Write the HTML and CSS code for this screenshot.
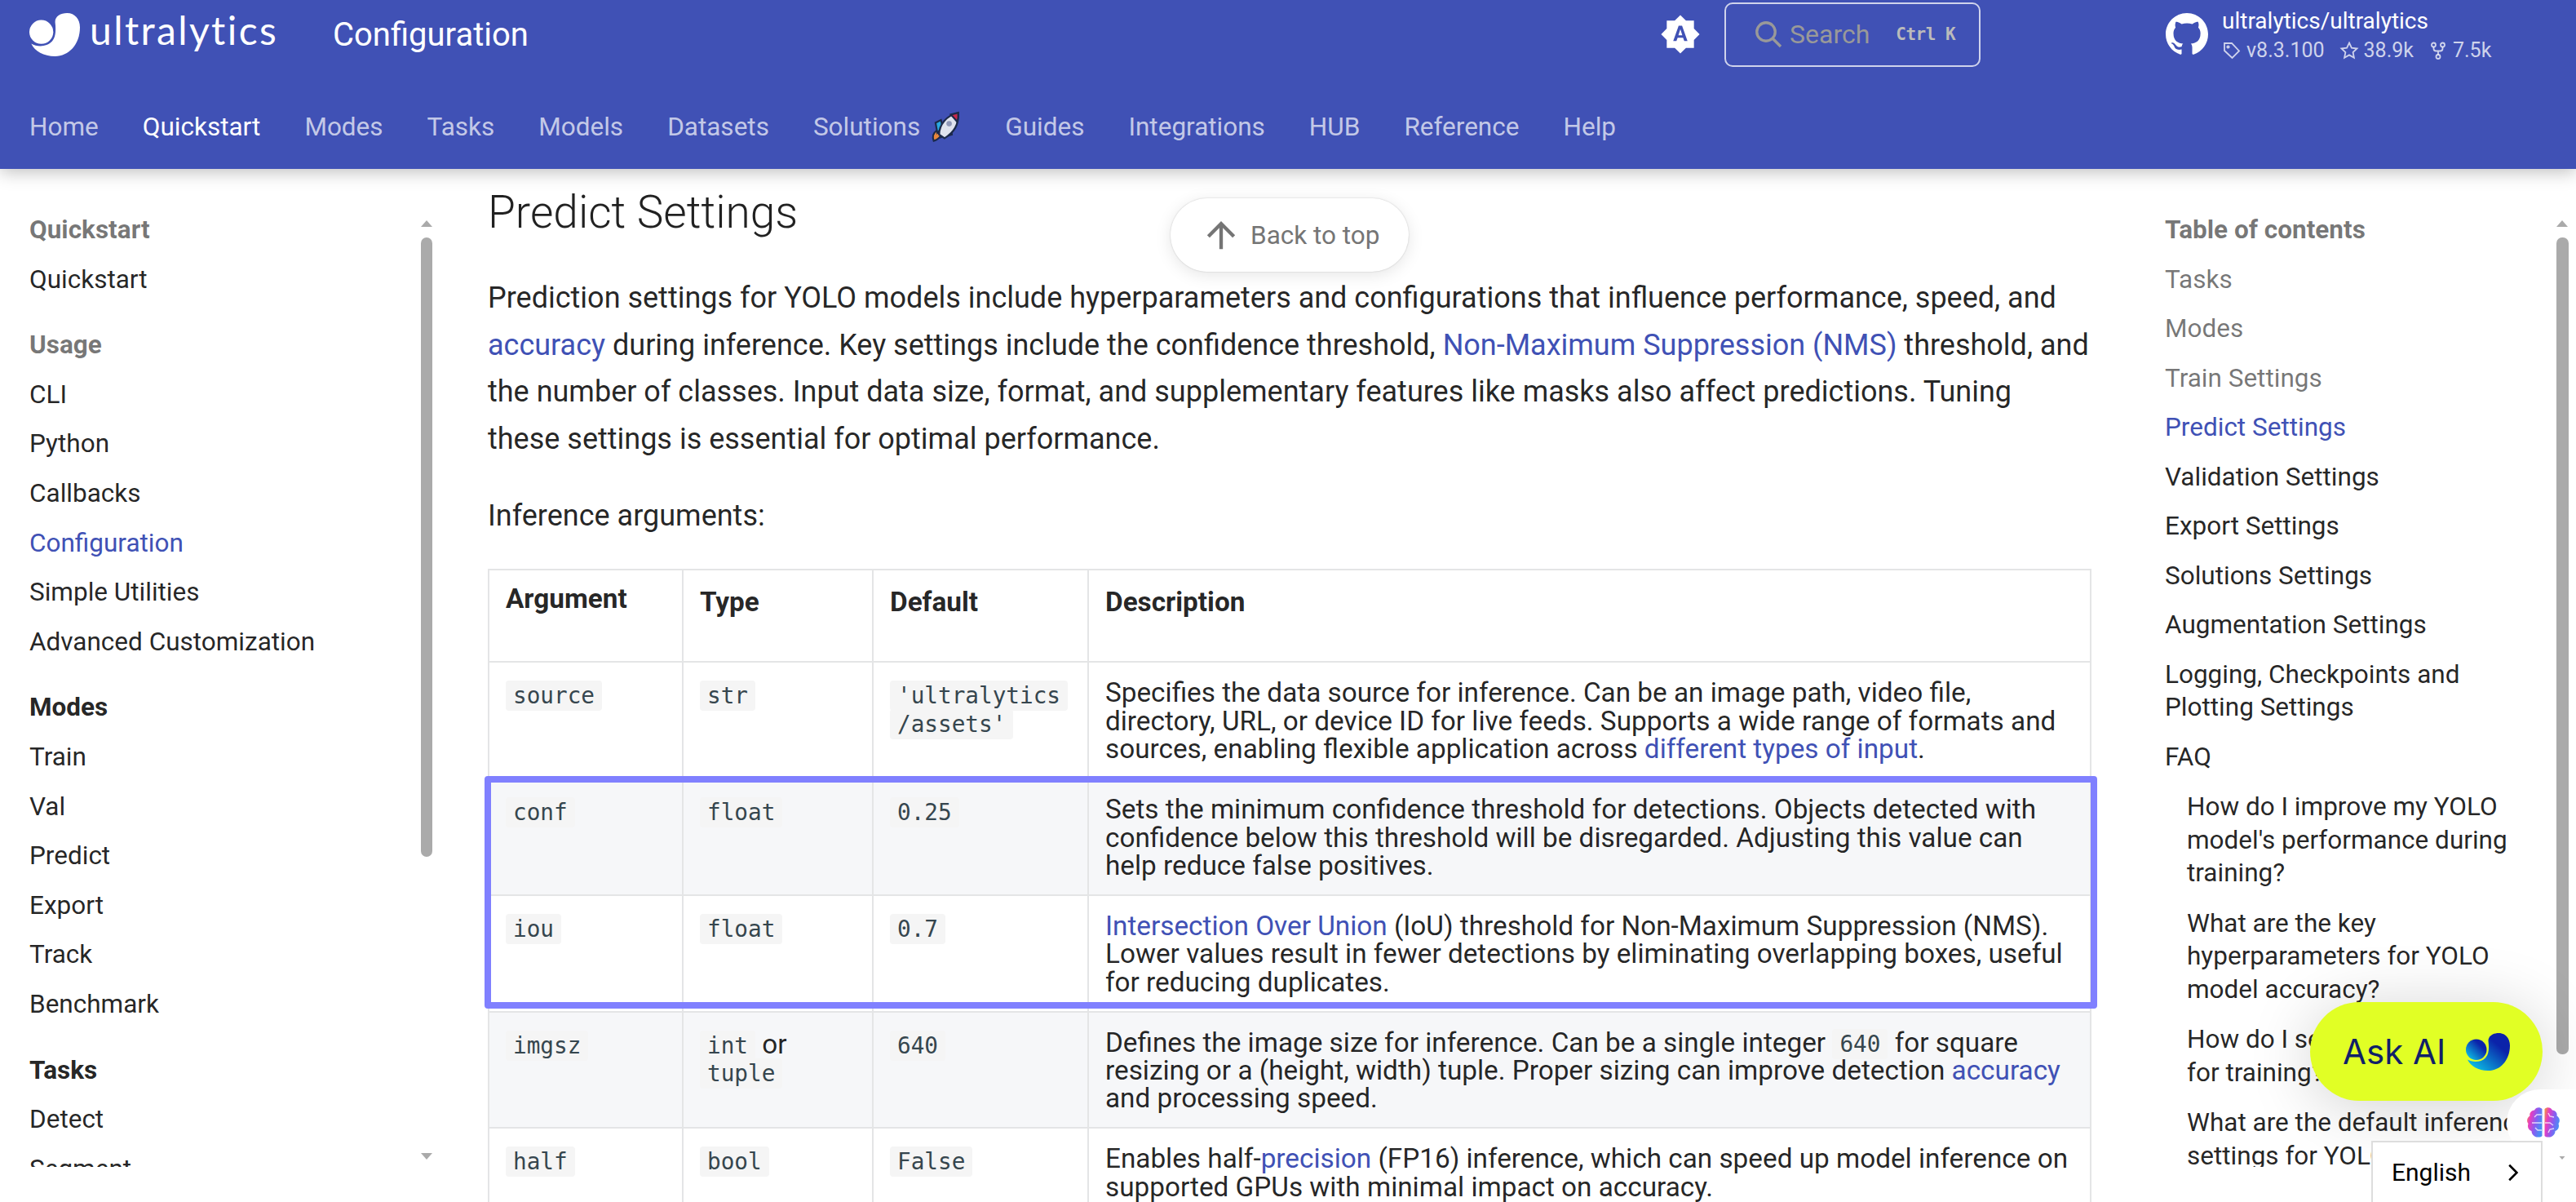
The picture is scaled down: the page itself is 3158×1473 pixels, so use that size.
FILE: index.html
```html
<!DOCTYPE html>
<html lang="en">

<head>
  <meta charset="UTF-8">
  <meta name="viewport" content="width=device-width, initial-scale=1.0">
  <title>Configuration - Ultralytics YOLO Docs</title>
  <link rel="stylesheet" href="styles.css">
</head>

<body>
  <svg width="0" height="0" class="defs">
    <defs>
      <symbol id="mark" viewBox="0 0 161 137">
        <circle cx="38" cy="60" r="38" />
        <path d="M82 28C82 10 100 0 120 0c25 0 41 20 41 45 0 55-36 92-79 92-37 0-64-15-76-40 19 11 49 11 66-7 10-12 14-28 10-62z" />
      </symbol>
      <linearGradient id="markfill" x1="1" y1="0" x2="0" y2="1">
        <stop offset="0.3" stop-color="#0b23a9" />
        <stop offset="1" stop-color="#0bd8ee" />
      </linearGradient>
      <linearGradient id="brainfill" x1="0" y1="0" x2="1" y2="0.4">
        <stop offset="0" stop-color="#f0a030" />
        <stop offset="0.3" stop-color="#e83cc0" />
        <stop offset="0.65" stop-color="#8a5cf0" />
        <stop offset="1" stop-color="#4a8cf5" />
      </linearGradient>
    </defs>
  </svg>

  <header class="header">
    <div class="topbar">
      <div class="brand">
        <svg class="brand-mark"><use href="#mark" /></svg>
        <span class="brand-name">ultralytics</span>
      </div>
      <div class="page-title">Configuration</div>
      <svg class="theme-icon" viewBox="0 0 24 24"><path d="M14.3 16l-.7-2h-3.2l-.7 2H7.8L11 7h2l3.2 9h-1.9M20 8.69V4h-4.69L12 .69 8.69 4H4v4.69L.69 12 4 15.31V20h4.69L12 23.31 15.31 20H20v-4.69L23.31 12 20 8.69m-9.15 3.96h2.3L12 9l-1.15 3.65Z" /></svg>
      <div class="search">
        <svg class="search-icon" viewBox="0 0 24 24"><circle cx="10" cy="10" r="7.5" /><path d="M15.5 15.5 22 22" /></svg>
        <span class="search-text">Search</span>
        <span class="search-key">Ctrl K</span>
      </div>
      <div class="repo">
        <svg class="repo-icon" viewBox="0 0 16 16"><path d="M8 0C3.58 0 0 3.58 0 8c0 3.54 2.29 6.53 5.47 7.59.4.07.55-.17.55-.38 0-.19-.01-.82-.01-1.49-2.01.37-2.53-.49-2.69-.94-.09-.23-.48-.94-.82-1.13-.28-.15-.68-.52-.01-.53.63-.01 1.08.58 1.23.82.72 1.21 1.87.87 2.33.66.07-.52.28-.87.51-1.07-1.78-.2-3.64-.89-3.64-3.95 0-.87.31-1.59.82-2.15-.08-.2-.36-1.02.08-2.12 0 0 .67-.21 2.2.82.64-.18 1.32-.27 2-.27.68 0 1.36.09 2 .27 1.53-1.04 2.2-.82 2.2-.82.44 1.1.16 1.92.08 2.12.51.56.82 1.27.82 2.15 0 3.07-1.87 3.75-3.65 3.95.29.25.54.73.54 1.48 0 1.07-.01 1.93-.01 2.2 0 .21.15.46.55.38A8.013 8.013 0 0016 8c0-4.42-3.58-8-8-8z" /></svg>
        <div class="repo-info">
          <div class="repo-name">ultralytics/ultralytics</div>
          <div class="repo-facts">
            <span class="fact"><svg class="fact-icon" viewBox="0 0 24 24"><path d="M3 3h9l9 9.5-8.5 8.5L3 12z" /><circle cx="7.5" cy="7.5" r="1.2" /></svg>v8.3.100</span>
            <span class="fact"><svg class="fact-icon" viewBox="0 0 24 24"><path d="m12 2.5 2.9 6.2 6.6.8-4.9 4.6 1.3 6.7-5.9-3.4-5.9 3.4 1.3-6.7-4.9-4.6 6.6-.8z" /></svg>38.9k</span>
            <span class="fact"><svg class="fact-icon" viewBox="0 0 24 24"><circle cx="6.5" cy="5" r="2.5" /><circle cx="17.5" cy="5" r="2.5" /><circle cx="12" cy="19.5" r="2.5" /><path d="M6.5 7.5v2c0 2 1 3 3 3h5c2 0 3-1 3-3v-2M12 12.5V17" /></svg>7.5k</span>
          </div>
        </div>
      </div>
    </div>
    <nav class="tabs">
      <a>Home</a>
      <a class="active">Quickstart</a>
      <a>Modes</a>
      <a>Tasks</a>
      <a>Models</a>
      <a>Datasets</a>
      <a class="tab-rocket">Solutions
        <svg class="rocket" viewBox="0 0 36 36">
          <path d="M6 33c-2-5 0-9 3-11l5 5c-2 3-4 5-8 6z" fill="#e8873a" stroke="#1c2a4a" stroke-width="2" />
          <path d="M10 24 8 13l6-3 2 8z" fill="#2aa8e0" stroke="#1c2a4a" stroke-width="2" />
          <path d="M14 29 26 26l-1-7-7 3z" fill="#2aa8e0" stroke="#1c2a4a" stroke-width="2" />
          <path d="M12 26C12 15 20 5 33 2c1 13-5 22-15 28z" fill="#dfe3ee" stroke="#1c2a4a" stroke-width="2" />
          <path d="M25 4 33 2c.4 4 0 7-1 10z" fill="#c8284a" stroke="#1c2a4a" stroke-width="2" />
          <circle cx="23" cy="14" r="3" fill="#8f98b8" />
        </svg>
      </a>
      <a>Guides</a>
      <a>Integrations</a>
      <a>HUB</a>
      <a>Reference</a>
      <a>Help</a>
    </nav>
  </header>

  <main class="layout">
    <aside class="sidebar">
      <div class="side-list">
        <div class="side-head muted">Quickstart</div>
        <a class="side-item">Quickstart</a>
        <div class="side-head muted">Usage</div>
        <a class="side-item">CLI</a>
        <a class="side-item">Python</a>
        <a class="side-item">Callbacks</a>
        <a class="side-item current">Configuration</a>
        <a class="side-item">Simple Utilities</a>
        <a class="side-item">Advanced Customization</a>
        <div class="side-head">Modes</div>
        <a class="side-item">Train</a>
        <a class="side-item">Val</a>
        <a class="side-item">Predict</a>
        <a class="side-item">Export</a>
        <a class="side-item">Track</a>
        <a class="side-item">Benchmark</a>
        <div class="side-head">Tasks</div>
        <a class="side-item">Detect</a>
        <a class="side-item">Segment</a>
      </div>
      <div class="scrollbar">
        <span class="arrow-up"></span>
        <span class="thumb"></span>
        <span class="arrow-down"></span>
      </div>
    </aside>

    <article class="content">
      <h2 class="title">Predict Settings</h2>
      <p class="para">Prediction settings for YOLO models include hyperparameters and configurations that influence performance, speed, and <a>accuracy</a> during inference. Key settings include the confidence threshold, <a>Non-Maximum Suppression (NMS)</a> threshold, and the number of classes. Input data size, format, and supplementary features like masks also affect predictions. Tuning<br>these settings is essential for optimal performance.</p>
      <p class="para">Inference arguments:</p>
      <div class="table-wrap">
        <table class="args">
          <colgroup>
            <col class="col-arg">
            <col class="col-type">
            <col class="col-def">
            <col>
          </colgroup>
          <thead>
            <tr>
              <th class="th-arg">Argument</th>
              <th>Type</th>
              <th>Default</th>
              <th>Description</th>
            </tr>
          </thead>
          <tbody>
            <tr>
              <td><code>source</code></td>
              <td><code>str</code></td>
              <td><code>'ultralytics<br>/assets'</code></td>
              <td>Specifies the data source for inference. Can be an image path, video file, directory, URL, or device ID for live feeds. Supports a wide range of formats and sources, enabling flexible application across <a>different types of input</a>.</td>
            </tr>
            <tr>
              <td><code>conf</code></td>
              <td><code>float</code></td>
              <td><code>0.25</code></td>
              <td>Sets the minimum confidence threshold for detections. Objects detected with confidence below this threshold will be disregarded. Adjusting this value can help reduce false positives.</td>
            </tr>
            <tr>
              <td><code>iou</code></td>
              <td><code>float</code></td>
              <td><code>0.7</code></td>
              <td><a>Intersection Over Union</a> (IoU) threshold for Non-Maximum Suppression (NMS). Lower values result in fewer detections by eliminating overlapping boxes, useful for reducing duplicates.</td>
            </tr>
            <tr>
              <td><code>imgsz</code></td>
              <td><code>int</code> or <code>tuple</code></td>
              <td><code>640</code></td>
              <td>Defines the image size for inference. Can be a single integer <code>640</code> for square resizing or a (height, width) tuple. Proper sizing can improve detection <a>accuracy</a> and processing speed.</td>
            </tr>
            <tr>
              <td><code>half</code></td>
              <td><code>bool</code></td>
              <td><code>False</code></td>
              <td>Enables half-<a>precision</a> (FP16) inference, which can speed up model inference on supported GPUs with minimal impact on accuracy.</td>
            </tr>
          </tbody>
        </table>
        <div class="highlight"></div>
      </div>
    </article>

    <aside class="toc">
      <div class="toc-list">
        <div class="toc-title">Table of contents</div>
        <a class="toc-item past">Tasks</a>
        <a class="toc-item past">Modes</a>
        <a class="toc-item past">Train Settings</a>
        <a class="toc-item current">Predict Settings</a>
        <a class="toc-item">Validation Settings</a>
        <a class="toc-item">Export Settings</a>
        <a class="toc-item">Solutions Settings</a>
        <a class="toc-item">Augmentation Settings</a>
        <a class="toc-item">Logging, Checkpoints and Plotting Settings</a>
        <a class="toc-item">FAQ</a>
        <a class="toc-item sub">How do I improve my YOLO model's performance during training?</a>
        <a class="toc-item sub">What are the key hyperparameters for YOLO model accuracy?</a>
        <a class="toc-item sub">How do I select the batch size for training?</a>
        <a class="toc-item sub">What are the default inference settings for YOLO?</a>
      </div>
      <div class="scrollbar">
        <span class="arrow-up"></span>
        <span class="thumb toc-thumb"></span>
        <span class="arrow-down"></span>
      </div>
    </aside>
  </main>

  <a class="back-top">
    <svg class="back-icon" viewBox="0 0 24 24"><path d="M13 20h-2V8l-5.5 5.5-1.42-1.42L12 4.16l7.92 7.92-1.42 1.42L13 8v12Z" /></svg>
    Back to top
  </a>

  <a class="ask-ai">Ask AI <svg class="ask-mark"><use href="#mark" /></svg></a>

  <div class="brain-tab">
    <svg class="brain" viewBox="0 0 42 40">
      <path d="M19.500 3c-3-3-8-2-9.500 1.500C6 5 3.500 8 4.500 11.500 1 13.500 0 18 2.500 21 1 25 3 29 6.500 30c0 4.500 4 8 8.500 7.500 2 0 3.500-.5 4.500-1.500z" fill="url(#brainfill)" />
      <path d="M22.500 3c3-3 8-2 9.500 1.500C36 5 38.500 8 37.500 11.500 41 13.500 42 18 39.500 21c1.500 4-.5 8-4 9 0 4.500-4 8-8.500 7.500-2 0-3.500-.5-4.500-1.500z" fill="url(#brainfill)" />
      <path d="M19 10h-6l-3 3M19 20H7M19 29h-5l-3-3M27 8l2 4 5 1M23 20h6l4 3M27 32l2-4 5-1" fill="none" stroke="#fff" stroke-width="1.400" opacity=".75" />
    </svg>
  </div>

  <div class="lang">
    <span>English</span>
    <svg class="lang-chevron" viewBox="0 0 24 24"><path d="M8.500 3.500 17 12l-8.500 8.500" /></svg>
  </div>
</body>

</html>
```

FILE: styles.css
```css
html,
body {
  margin: 0;
  padding: 0;
  height: 100%;
}

body {
  overflow: hidden;
  background: #fff;
  color: rgba(0, 0, 0, 0.87);
  font-family: "Roboto", "Liberation Sans", sans-serif;
}

a {
  color: inherit;
  text-decoration: none;
}

.defs {
  position: absolute;
}

/* header */
.header {
  position: relative;
  z-index: 2;
  height: 207px;
  background: #4051b5;
  color: #fff;
  box-shadow: 0 4px 20px rgba(0, 0, 0, 0.25);
}

.topbar {
  display: flex;
  align-items: center;
  height: 84px;
  padding-left: 36px;
}

.brand {
  display: flex;
  align-items: center;
  width: 372px;
}

.brand-mark {
  width: 62px;
  height: 53px;
  margin-top: 1px;
  fill: #fff;
}

.brand-name {
  margin-left: 12px;
  margin-top: -10px;
  font-family: "Lato", sans-serif;
  font-size: 48px;
  line-height: 48px;
  letter-spacing: 2.4px;
}

.page-title {
  width: 1627px;
  font-size: 40px;
}

.theme-icon {
  width: 50px;
  height: 50px;
  fill: #fff;
}

.search {
  display: flex;
  align-items: center;
  box-sizing: border-box;
  width: 314px;
  height: 79px;
  margin-left: 29px;
  padding-left: 34px;
  border: 2px solid rgba(255, 255, 255, 0.75);
  border-radius: 10px;
}

.search-icon {
  width: 36px;
  height: 36px;
  fill: none;
  stroke: #999;
  stroke-width: 2.2;
}

.search-text {
  margin-left: 8px;
  font-size: 32px;
  color: #999;
}

.search-key {
  margin-left: 32px;
  font-family: "DejaVu Sans Mono", monospace;
  font-size: 21px;
  font-weight: 700;
  letter-spacing: -0.5px;
  color: #bbb;
}

.repo {
  display: flex;
  align-items: center;
  margin-left: 227px;
}

.repo-icon {
  width: 52px;
  height: 52px;
  fill: #fff;
}

.repo-info {
  margin-left: 17px;
  padding-top: 3px;
}

.repo-name {
  font-size: 28px;
  line-height: 36px;
}

.repo-facts {
  display: flex;
  gap: 18px;
  font-size: 25px;
  line-height: 36px;
  color: rgba(255, 255, 255, 0.75);
}

.fact {
  display: flex;
  align-items: center;
  gap: 6px;
}

.fact-icon {
  width: 24px;
  height: 24px;
  fill: none;
  stroke: rgba(255, 255, 255, 0.75);
  stroke-width: 1.8;
}

.tabs {
  display: flex;
  align-items: center;
  gap: 54px;
  height: 123px;
  padding: 20px 0 0 36px;
  box-sizing: border-box;
  font-size: 31.5px;
  color: rgba(255, 255, 255, 0.7);
}

.tabs .active {
  color: #fff;
}

.tab-rocket {
  display: flex;
  align-items: center;
  gap: 10px;
}

.rocket {
  width: 40px;
  height: 40px;
}

/* layout */
.layout {
  display: flex;
  height: 1223px;
}

.sidebar {
  display: flex;
  flex: none;
  box-sizing: border-box;
  width: 598px;
  padding: 55px 68px 0 36px;
  overflow: hidden;
}

.side-list {
  flex: 1;
  overflow: hidden;
  font-size: 31.5px;
  line-height: 40.6px;
}

.side-head {
  margin-top: 40px;
  font-weight: 700;
}

.side-head:first-child {
  margin-top: 0;
}

.side-head.muted {
  color: rgba(0, 0, 0, 0.54);
}

.side-item {
  display: block;
  margin-top: 20px;
}

.current {
  color: #4051b5;
}

.scrollbar {
  display: flex;
  flex: none;
  flex-direction: column;
  align-items: center;
  width: 14px;
  padding-top: 8px;
}

.arrow-up,
.arrow-down {
  width: 0;
  height: 0;
  border-left: 7px solid transparent;
  border-right: 7px solid transparent;
}

.arrow-up {
  border-bottom: 8px solid #aaa;
}

.arrow-down {
  margin-top: auto;
  margin-bottom: 9px;
  border-top: 8px solid #aaa;
}

.thumb {
  width: 14px;
  height: 759px;
  margin-top: 13px;
  background: #aaa;
  border-radius: 7px;
}

.toc-thumb {
  width: 15px;
  height: 1001px;
}

/* content */
.content {
  flex: none;
  width: 1966px;
  padding-top: 23px;
}

.title {
  margin: 0;
  font-size: 55px;
  font-weight: 300;
  line-height: 60px;
}

.para {
  margin: 47px 0 0;
  font-size: 36px;
  line-height: 57.6px;
}

.para+.para {
  margin-top: 37px;
}

.para a,
.args a {
  color: #4051b5;
}

.table-wrap {
  position: relative;
  margin-top: 35px;
  font-size: 33.3px;
  line-height: 34.4px;
}

.args {
  width: 100%;
  table-layout: fixed;
  border-collapse: collapse;
}

.args th,
.args td {
  padding: 20px 20px 17.5px;
  border: 2px solid #e4e5e6;
  text-align: left;
  vertical-align: top;
}

.args th {
  height: 72px;
  padding-top: 22px;
  font-weight: 700;
}

.args .th-arg {
  padding-top: 18px;
}

.args td:not(:last-child) {
  padding-top: 22px;
  padding-bottom: 15.5px;
}

.args tbody tr:nth-child(2n) {
  background: #f6f7f9;
}

.col-arg {
  width: 238px;
}

.col-type {
  width: 233px;
}

.col-def {
  width: 264px;
}

code {
  padding: 2px 9px;
  font-family: "DejaVu Sans Mono", "Liberation Mono", monospace;
  font-size: 27.7px;
  line-height: 30px;
  color: #36464e;
  background: #f5f5f5;
  border-radius: 4px;
  -webkit-box-decoration-break: clone;
  box-decoration-break: clone;
}

.highlight {
  position: absolute;
  top: 254px;
  left: -4px;
  width: 1977px;
  height: 285px;
  box-sizing: border-box;
  border: 8px solid #8080ff;
  border-radius: 4px;
}

/* toc */
.toc {
  display: flex;
  flex: none;
  box-sizing: border-box;
  width: 494px;
  margin-left: 90px;
  padding-top: 55px;
}

.toc-list {
  flex: 1;
  overflow: hidden;
  padding-right: 15px;
  font-size: 31.5px;
  line-height: 40.7px;
}

.toc-title {
  font-weight: 700;
  color: rgba(0, 0, 0, 0.54);
}

.toc-item {
  display: block;
  margin-top: 19.8px;
}

.toc-item.past {
  color: rgba(0, 0, 0, 0.54);
}

.toc-item.sub {
  margin-top: 20.6px;
  padding-left: 27px;
}

/* floating bits */
.back-top {
  position: absolute;
  top: 243px;
  left: 1435px;
  z-index: 1;
  display: flex;
  align-items: center;
  gap: 10px;
  box-sizing: border-box;
  width: 292px;
  height: 90px;
  padding-left: 36px;
  border-radius: 45px;
  background: #fff;
  font-size: 31.5px;
  color: #757575;
  box-shadow: 0 4px 20px rgba(0, 0, 0, 0.1), 0 0 2px rgba(0, 0, 0, 0.2);
}

.back-icon {
  width: 52px;
  height: 52px;
  fill: #757575;
}

.ask-ai {
  position: absolute;
  top: 1228px;
  left: 2832px;
  z-index: 3;
  display: flex;
  align-items: center;
  gap: 25px;
  box-sizing: border-box;
  width: 285px;
  height: 121px;
  padding-left: 40px;
  border-radius: 61px;
  background: #e1ff25;
  font-family: "Inter", sans-serif;
  font-size: 42px;
  color: #111f68;
  box-shadow: 0 8px 80px rgba(0, 0, 0, 0.18);
}

.ask-mark {
  width: 54px;
  height: 46px;
  fill: url(#markfill);
}

.brain-tab {
  position: absolute;
  top: 1335px;
  left: 3073px;
  z-index: 3;
  display: flex;
  align-items: center;
  width: 90px;
  height: 82px;
  padding-left: 24px;
  box-sizing: border-box;
  border-radius: 41px 0 0 41px;
  background: #fff;
}

.brain {
  width: 42px;
  height: 40px;
}

.lang {
  position: absolute;
  top: 1398px;
  left: 2907px;
  z-index: 4;
  display: flex;
  align-items: center;
  justify-content: space-between;
  box-sizing: border-box;
  width: 210px;
  height: 75px;
  padding: 0 22px 0 23px;
  border: 2px solid #ddd;
  border-bottom: 0;
  background: #fff;
  font-size: 30px;
  color: #000;
}

.lang-chevron {
  width: 26px;
  height: 26px;
  fill: none;
  stroke: #000;
  stroke-width: 2.4;
}
```
